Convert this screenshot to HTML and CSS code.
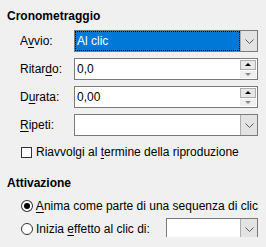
FILE: index.html
```html
<!DOCTYPE html>
<html>

<head>
    <meta charset="UTF-8">
    <title>Effetto - Cronometraggio</title>
    <link rel="stylesheet" href="styles.css">
</head>

<body>
    <div class="panel">
        <h2 class="title">Cronometraggio</h2>
        <div class="form">
            <label class="lbl">A<u>v</u>vio:</label>
            <div class="combo">
                <span class="value selected"><span class="focus">Al clic</span></span>
                <span class="drop">
                    <svg width="9" height="5" viewBox="0 0 9 5"><path d="M0.5 0.5 L4.5 4.5 L8.5 0.5" fill="none" stroke="#5a5a5a" stroke-width="1"/></svg>
                </span>
            </div>

            <label class="lbl">Ritar<u>d</u>o:</label>
            <div class="spin">
                <span class="value">0,0</span>
                <span class="arrows">
                    <span class="arrow up"></span>
                    <span class="arrow down"></span>
                </span>
            </div>

            <label class="lbl">D<u>u</u>rata:</label>
            <div class="spin">
                <span class="value">0,00</span>
                <span class="arrows">
                    <span class="arrow up"></span>
                    <span class="arrow down"></span>
                </span>
            </div>

            <label class="lbl"><u>R</u>ipeti:</label>
            <div class="combo">
                <span class="value"></span>
                <span class="drop">
                    <svg width="9" height="5" viewBox="0 0 9 5"><path d="M0.5 0.5 L4.5 4.5 L8.5 0.5" fill="none" stroke="#5a5a5a" stroke-width="1"/></svg>
                </span>
            </div>
        </div>

        <label class="check">
            <span class="box"></span>
            <span class="text">Riavvolgi al <u>t</u>ermine della riproduzione</span>
        </label>

        <h2 class="title second">Attivazione</h2>
        <div class="radio-row first">
            <span class="radio on"></span>
            <span class="text"><u>A</u>nima come parte di una sequenza di clic</span>
        </div>
        <div class="radio-row">
            <span class="radio"></span>
            <span class="text">Inizia <u>e</u>ffetto al clic di:</span>
            <div class="combo small">
                <span class="value"></span>
                <span class="drop">
                    <svg width="9" height="5" viewBox="0 0 9 5"><path d="M0.5 0.5 L4.5 4.5 L8.5 0.5" fill="none" stroke="#5a5a5a" stroke-width="1"/></svg>
                </span>
            </div>
        </div>
    </div>
</body>

</html>
```

FILE: styles.css
```css
* {
    margin: 0;
    padding: 0;
    box-sizing: border-box;
}

body {
    font-family: "Liberation Sans", Arial, sans-serif;
    font-size: 12px;
    color: #000;
    background-color: #f0f0f0;
}

u {
    text-decoration-thickness: 1px;
    text-underline-offset: 2px;
}

.panel {
    padding: 9px 8px 0 7px;
}

.title {
    font-size: 12px;
    font-weight: bold;
    line-height: 14px;
}

.title.second {
    margin-top: 16px;
}

/* Label + field grid */
.form {
    display: grid;
    grid-template-columns: 54px 184px;
    grid-auto-rows: 22px;
    row-gap: 6px;
    margin: 7px 0 0 13px;
}

.lbl {
    display: flex;
    align-items: center;
}

.combo,
.spin {
    display: flex;
    border: 1px solid #7a7a7a;
    background-color: #fff;
}

.value {
    flex: 1;
    display: flex;
    align-items: center;
    padding-left: 2px;
}

.value.selected {
    background-color: #0078d7;
    color: #fff;
    padding: 0;
}

.focus {
    flex: 1;
    align-self: stretch;
    display: flex;
    align-items: center;
    padding-left: 2px;
    outline: 1px dotted #000;
    outline-offset: -1px;
}

.drop {
    width: 17px;
    display: flex;
    align-items: center;
    justify-content: center;
    background-color: #e3e3e3;
    border-left: 1px solid #adadad;
}

.arrows {
    width: 17px;
    display: flex;
    flex-direction: column;
    gap: 1px;
    padding: 1px 1px 1px 0;
}

.arrow {
    flex: 1;
    display: flex;
    align-items: center;
    justify-content: center;
    background-color: #e8e8e8;
}

.arrow.up {
    border: 1px solid #adadad;
}

.arrow.up::after,
.arrow.down::after {
    content: "";
    border-left: 3px solid transparent;
    border-right: 3px solid transparent;
}

.arrow.up::after {
    border-bottom: 3px solid #000;
}

.arrow.down {
    background-color: #f0f0f0;
}

.arrow.down::after {
    border-top: 3px solid #8a8a8a;
}

.text {
    white-space: nowrap;
}

/* Checkbox */
.check {
    display: flex;
    align-items: center;
    gap: 4px;
    height: 16px;
    margin: 8px 0 0 14px;
}

.box {
    width: 11px;
    height: 11px;
    border: 1px solid #333;
    background-color: #fff;
}

/* Radios */
.radio-row {
    display: flex;
    align-items: center;
    gap: 3px;
    height: 16px;
    margin-left: 14px;
}

.radio-row.first {
    margin-top: 8px;
    margin-bottom: 7px;
}

.radio {
    width: 12px;
    height: 12px;
    border: 1px solid #333;
    border-radius: 50%;
    background-color: #fff;
    display: flex;
    align-items: center;
    justify-content: center;
}

.radio.on::after {
    content: "";
    width: 6px;
    height: 6px;
    border-radius: 50%;
    background-color: #000;
}

.combo.small {
    width: 92px;
    height: 23px;
    margin-left: auto;
}
```
